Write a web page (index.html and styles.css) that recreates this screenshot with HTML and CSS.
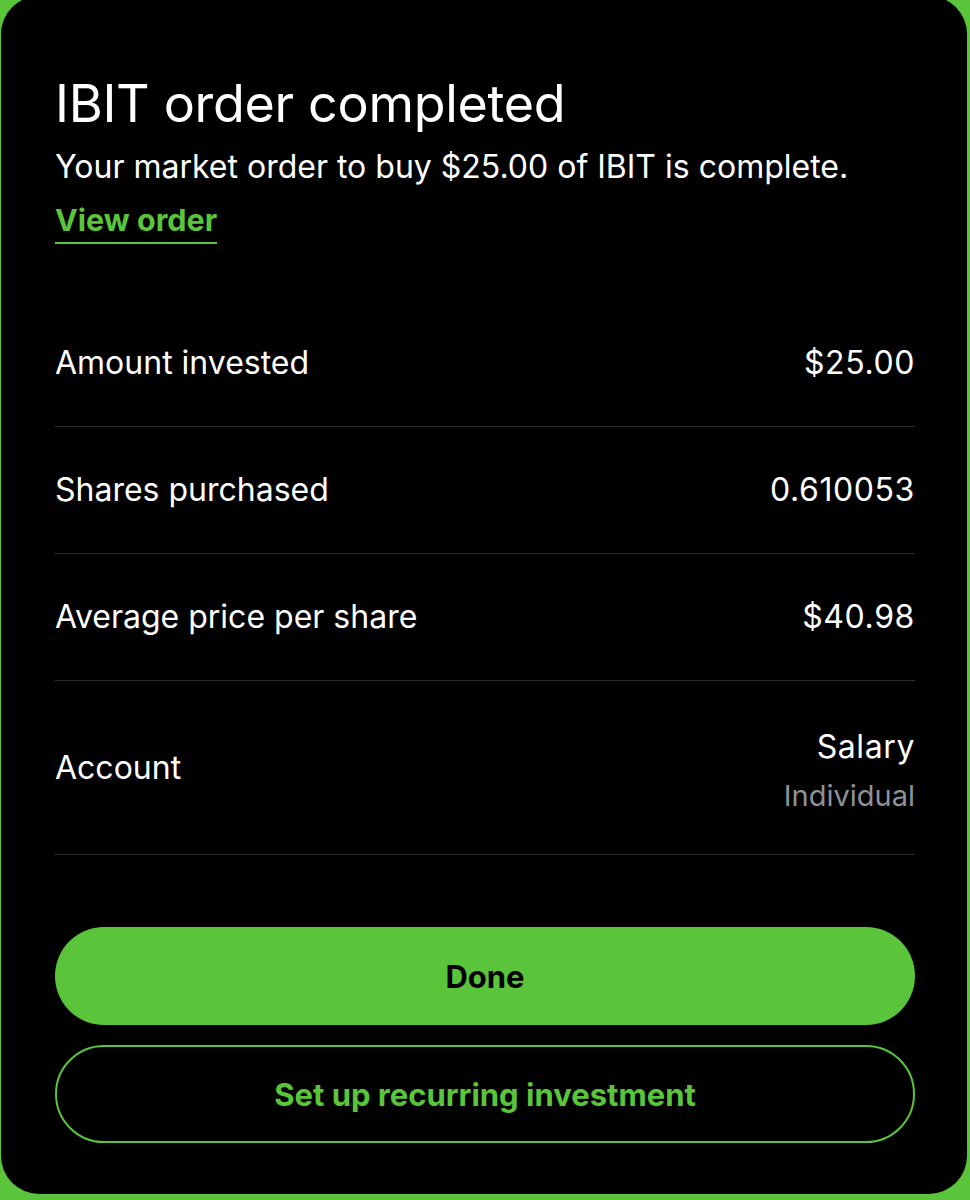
FILE: index.html
```html
<!DOCTYPE html>
<html>
<head>
<meta charset="utf-8">
<link rel="stylesheet" href="styles.css">
</head>
<body>
<div class="card">
  <h1 class="title">IBIT order completed</h1>
  <p class="subtitle">Your market order to buy $25.00 of IBIT is complete.</p>
  <a class="link">View order</a>
  <div class="rows">
    <div class="row"><span class="label">Amount invested</span><span class="value">$25.00</span></div>
    <div class="row"><span class="label">Shares purchased</span><span class="value">0.610053</span></div>
    <div class="row"><span class="label">Average price per share</span><span class="value">$40.98</span></div>
    <div class="row tall"><span class="label">Account</span><span class="value-stack"><span class="value">Salary</span><span class="sub">Individual</span></span></div>
  </div>
  <div class="actions">
    <button class="btn primary">Done</button>
    <button class="btn outline">Set up recurring investment</button>
  </div>
</div>
</body>
</html>
```

FILE: styles.css
```css
html, body {
  margin: 0;
  padding: 0;
  background: #5ac53b;
  height: 1200px;
  overflow: hidden;
}
.card {
  box-sizing: border-box;
  width: 966px;
  height: 1198px;
  margin: -4px 0 0 1px;
  background: #000;
  border-radius: 38px;
  padding: 78px 52px 0 54px;
  font-family: Inter, "Noto Sans", sans-serif;
  color: #fff;
  display: flex;
  flex-direction: column;
}
.title {
  margin: 0;
  font-size: 52px;
  font-weight: 400;
  line-height: 60px;
  letter-spacing: -0.3px;
}
.subtitle {
  margin: 12px 0 0 0;
  font-size: 32px;
  line-height: 42px;
  font-weight: 400;
}
.link {
  align-self: flex-start;
  margin-top: 14px;
  color: #5ac53b;
  font-size: 30.5px;
  font-weight: 700;
  line-height: 36px;
  padding-bottom: 4px;
  border-bottom: 2px solid #5ac53b;
}
.rows {
  margin-top: 56px;
  display: flex;
  flex-direction: column;
}
.row {
  height: 126px;
  display: flex;
  align-items: center;
  justify-content: space-between;
  border-bottom: 1px solid #2b2b2b;
  font-size: 32px;
  line-height: 40px;
}
.value {
  letter-spacing: 0.6px;
}
.row.tall {
  height: 173px;
}
.value-stack {
  display: flex;
  flex-direction: column;
  align-items: flex-end;
  padding-top: 6px;
}
.sub {
  color: #8d9398;
  font-size: 29px;
  line-height: 38px;
  margin-top: 10px;
}
.actions {
  margin-top: 72px;
  display: flex;
  flex-direction: column;
  gap: 20px;
}
.btn {
  height: 98px;
  border-radius: 49px;
  font-family: Inter, "Noto Sans", sans-serif;
  font-size: 31px;
  font-weight: 700;
  cursor: pointer;
}
.primary {
  background: #5ac53b;
  color: #000;
  border: none;
}
.outline {
  background: #000;
  color: #5ac53b;
  border: 2px solid #5ac53b;
}
```
